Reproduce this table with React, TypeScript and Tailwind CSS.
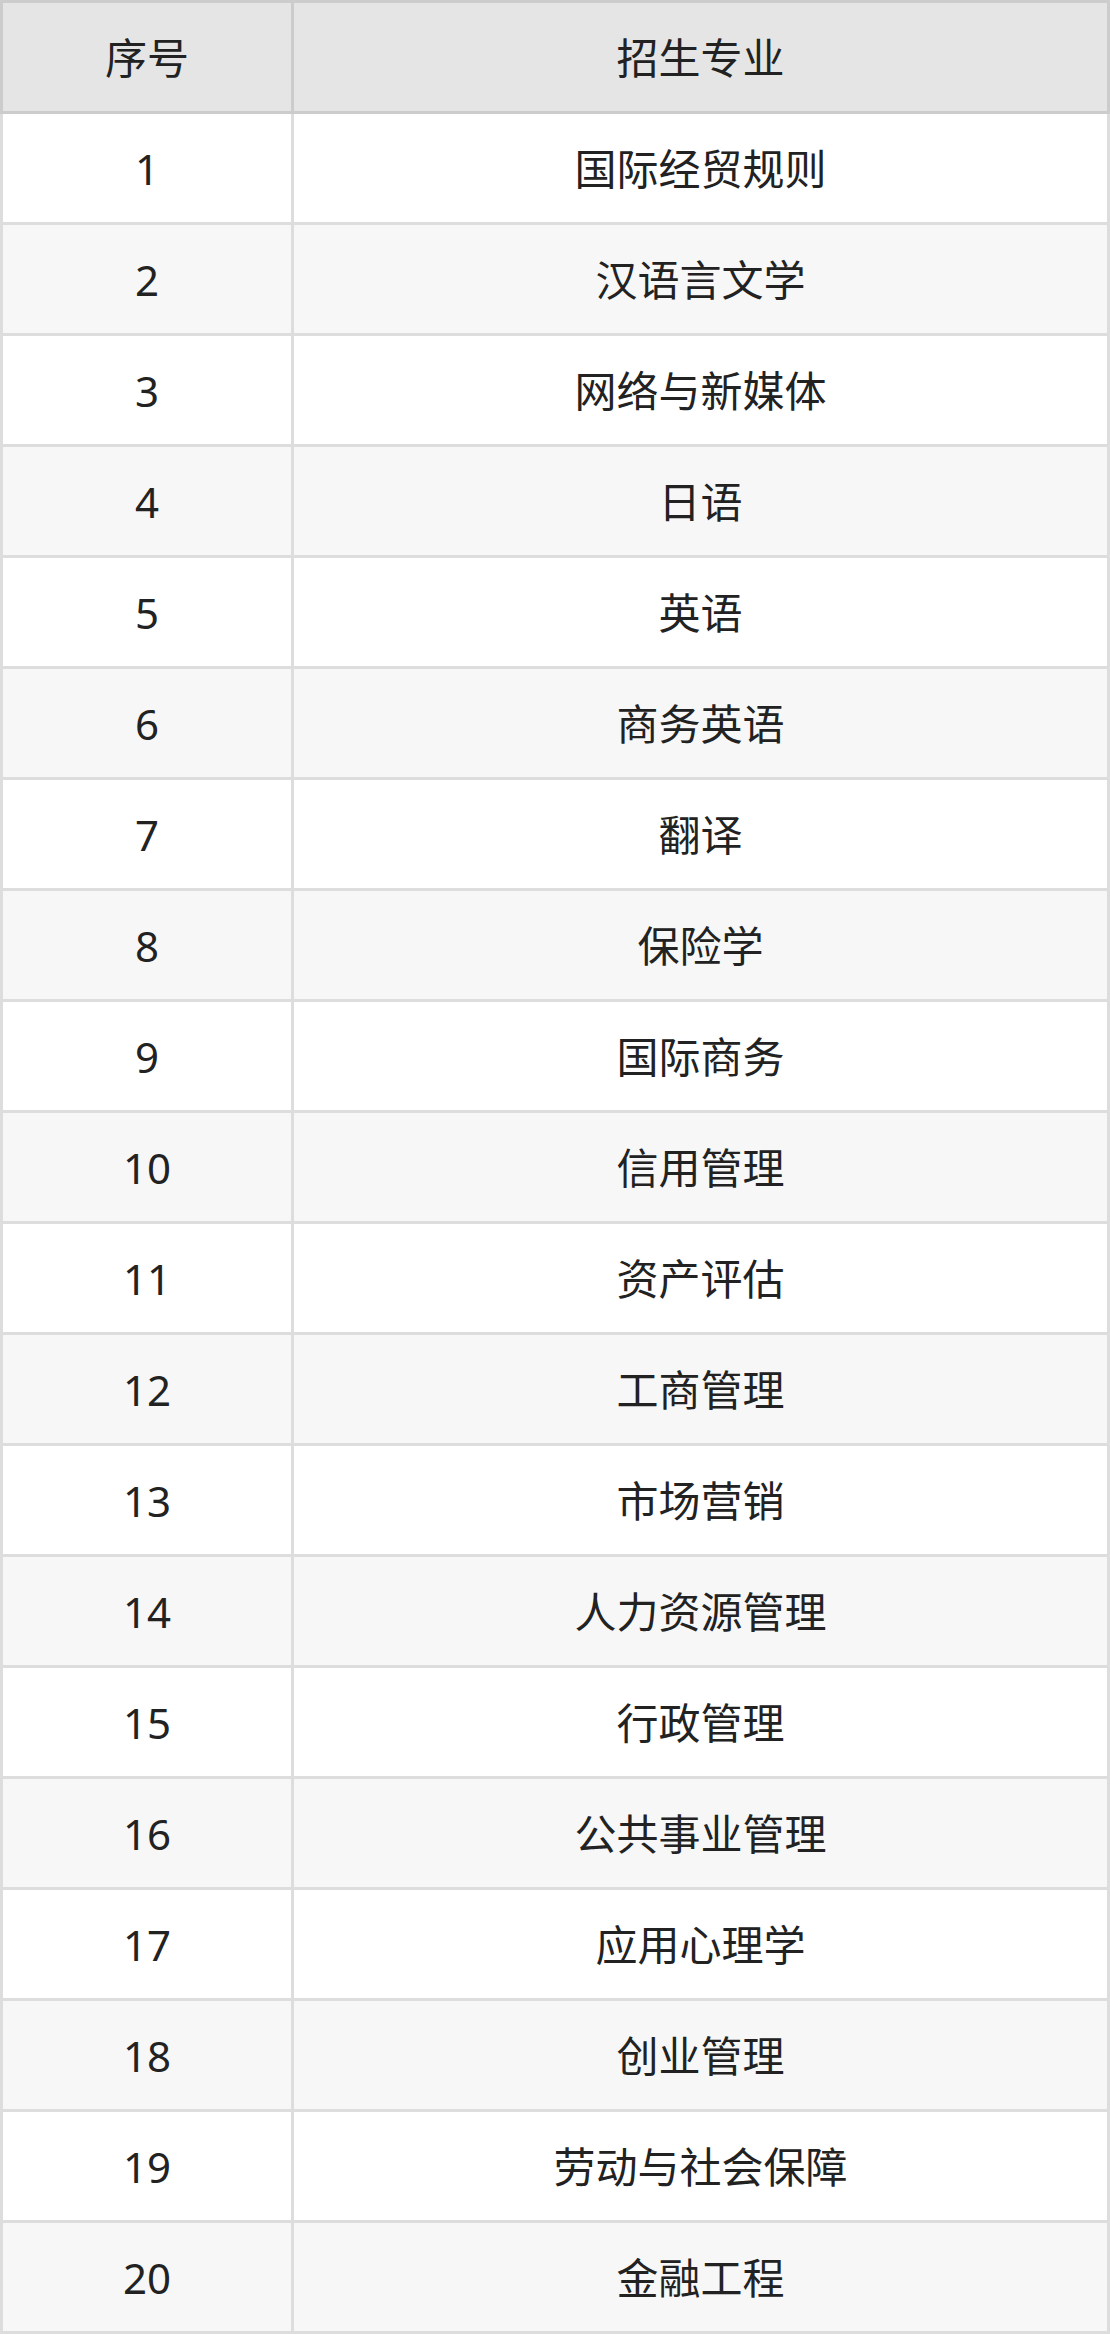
const majors = [
  '国际经贸规则',
  '汉语言文学',
  '网络与新媒体',
  '日语',
  '英语',
  '商务英语',
  '翻译',
  '保险学',
  '国际商务',
  '信用管理',
  '资产评估',
  '工商管理',
  '市场营销',
  '人力资源管理',
  '行政管理',
  '公共事业管理',
  '应用心理学',
  '创业管理',
  '劳动与社会保障',
  '金融工程',
];

const font = { fontFamily: '"Noto Sans", "Noto Sans CJK SC", sans-serif' };

export default function App() {
  return (
    <div className="w-[1110px] bg-white text-[42px] text-[#222]" style={font}>
      <div className="flex h-[114px] border-[3px] border-[#cccccc] bg-[#e5e5e5]">
        <div className="flex w-[291px] items-center justify-center border-r-[3px] border-[#cccccc]">序号</div>
        <div className="flex flex-1 items-center justify-center">招生专业</div>
      </div>
      {majors.map((name, i) => (
        <div
          key={i}
          className={
            'flex h-[111px] border-x-[3px] border-b-[3px] border-[#dddddd] ' +
            (i % 2 === 1 ? 'bg-[#f7f7f7]' : 'bg-white')
          }
        >
          <div className="flex w-[291px] items-center justify-center border-r-[3px] border-[#dddddd]">{i + 1}</div>
          <div className="flex flex-1 items-center justify-center">{name}</div>
        </div>
      ))}
    </div>
  );
}
